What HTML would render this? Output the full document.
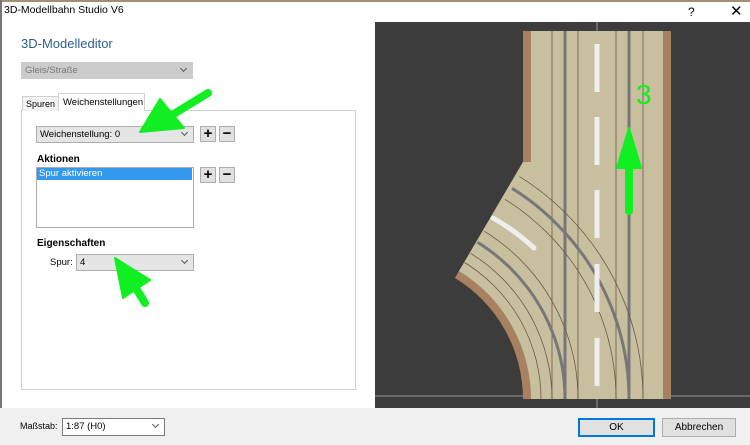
<!DOCTYPE html>
<html><head><meta charset="utf-8"><style>
*{margin:0;padding:0;box-sizing:border-box}
html,body{width:750px;height:445px;overflow:hidden}
body{background:#fff;font-family:"Liberation Sans",sans-serif;font-size:11px;color:#000;position:relative}
.a{position:absolute}
.combo{position:absolute;background:#e5e5e5;border:1px solid #adadad;font-size:9.5px;padding:2px 3px;line-height:11px;overflow:hidden}
.combo:after{content:"";position:absolute;right:6px;top:3px;width:4px;height:4px;border-right:1px solid #555;border-bottom:1px solid #555;transform:rotate(45deg)}
.btn{position:absolute;width:16px;height:16px;background:#e1e1e1;border:1px solid #adadad;font-weight:bold;font-size:15px;line-height:13px;text-align:center}
</style></head><body>
<div class="a" style="left:0;top:0;width:750px;height:2px;background:#a09070"></div>
<div class="a" style="left:0;top:0;width:2px;height:445px;background:#777"></div>
<div class="a" style="left:4px;top:4px;font-size:10.5px">3D-Modellbahn Studio V6</div>
<div class="a" style="left:688px;top:5px;font-size:12px">?</div>
<div class="a" style="left:730px;top:2px;font-size:15px">✕</div>
<div class="a" style="left:21px;top:36px;font-size:13px;color:#2b5f90">3D-Modelleditor</div>
<div class="combo" style="left:21px;top:62px;width:172px;height:17px;background:#ccc;border-color:#ccc;color:#777">Gleis/Straße</div>
<div class="a" style="left:21px;top:110px;width:335px;height:280px;border:1px solid #d0d0d0"></div>
<div class="a" style="left:22px;top:96px;width:37px;height:15px;border:1px solid #d0d0d0;border-bottom:none;font-size:9px;padding:2px 3px;background:#f3f3f3">Spuren</div>
<div class="a" style="left:58px;top:93px;width:87px;height:18px;border:1px solid #d0d0d0;border-bottom:none;font-size:9.5px;padding:3px 4px;background:#fff;white-space:nowrap">Weichenstellungen</div>
<div class="combo" style="left:36px;top:126px;width:158px;height:17px">Weichenstellung: 0</div>
<div class="btn" style="left:200px;top:126px">+</div><div class="btn" style="left:219px;top:126px">−</div>
<div class="a" style="left:37px;top:154px;font-weight:bold;font-size:10px">Aktionen</div>
<div class="a" style="left:36px;top:167px;width:158px;height:61px;border:1px solid #adadad"></div>
<div class="a" style="left:37px;top:168px;width:155px;height:12px;background:#3399ee;color:#fff;font-size:9.5px;padding-left:2px;line-height:12px">Spur aktivieren</div>
<div class="btn" style="left:200px;top:167px">+</div><div class="btn" style="left:219px;top:167px">−</div>
<div class="a" style="left:37px;top:238px;font-weight:bold;font-size:10px">Eigenschaften</div>
<div class="a" style="left:50px;top:257px;font-size:9.5px">Spur:</div>
<div class="combo" style="left:76px;top:254px;width:118px;height:17px">4</div>
<div class="a" style="left:0;top:408px;width:750px;height:37px;background:#f0f0f0"></div>
<div class="a" style="left:20px;top:421px;font-size:9px">Maßstab:</div>
<div class="combo" style="left:62px;top:418px;width:103px;height:18px;background:#fff;border-color:#7a7a7a">1:87 (H0)</div>
<div class="a" style="left:578px;top:418px;width:77px;height:19px;border:2px solid #0078d7;background:#e1e1e1;text-align:center;font-size:10px;line-height:15px">OK</div>
<div class="a" style="left:662px;top:418px;width:74px;height:19px;border:1px solid #adadad;background:#e1e1e1;text-align:center;font-size:10px;line-height:17px">Abbrechen</div>
<svg class="a" style="left:0;top:0" width="750" height="445">
<defs><clipPath id="c"><path d="M531,31 L663,31 L663,399 L531,399 A150 150 0 0 0 459,271 L527,165 L531,165 Z"/></clipPath></defs>
<rect x="375" y="22" width="375" height="386" fill="#3c3c3c"/>
<line x1="375" y1="396" x2="750" y2="396" stroke="#999"/>
<line x1="597" y1="22" x2="597" y2="31" stroke="#999"/>
<line x1="597" y1="399" x2="597" y2="408" stroke="#999"/>
<path d="M523,31 L671,31 L671,399 L523,399 A142 142 0 0 0 455,278 L523,162 Z" fill="#a88260"/>
<path d="M531,31 L663,31 L663,399 L531,399 A150 150 0 0 0 459,271 L525,162 L531,162 Z" fill="#c8bf9f"/>
<path d="M523,162 L531,162 L531,166 L459,271 L455,278 Z" fill="#c8bf9f"/>
<g fill="none">
<g stroke="#6b5a48" stroke-width="0.8">
<line x1="552" y1="31" x2="552" y2="399"/><line x1="578" y1="31" x2="578" y2="399"/>
<line x1="616" y1="31" x2="616" y2="399"/><line x1="643" y1="31" x2="643" y2="399"/>
</g>
<g stroke="#77777a" stroke-width="3">
<line x1="565" y1="31" x2="565" y2="399"/><line x1="629" y1="31" x2="629" y2="399"/>
</g>
<g clip-path="url(#c)">
<g stroke="#6b5a48" stroke-width="0.8">
<circle cx="381" cy="399" r="160"/><circle cx="381" cy="399" r="171"/><circle cx="381" cy="399" r="197"/>
<circle cx="381" cy="399" r="235"/><circle cx="381" cy="399" r="262"/>
</g>
<g stroke="#77777a" stroke-width="3">
<circle cx="381" cy="399" r="184"/><circle cx="381" cy="399" r="248"/>
</g>
</g>
<g stroke="#eeeeee" stroke-width="5">
<line x1="597" y1="44" x2="597" y2="92"/><line x1="597" y1="117" x2="597" y2="165"/>
<line x1="597" y1="190" x2="597" y2="238"/><line x1="597" y1="264" x2="597" y2="312"/>
<line x1="597" y1="338" x2="597" y2="386"/>
<path d="M493,218 A214 214 0 0 1 534,248" stroke-linecap="round"/>
</g>
</g>
<g fill="#11ee22" stroke="#11ee22" stroke-linecap="round" stroke-linejoin="round">
<line x1="208" y1="93" x2="172" y2="115" stroke-width="8"/>
<polygon points="140,132 160,99 184,128" stroke-width="2"/>
<line x1="145" y1="303" x2="134" y2="285" stroke-width="8"/>
<polygon points="115,258 123,298 150,280" stroke-width="2"/>
<line x1="629" y1="211" x2="629" y2="165" stroke-width="8"/>
<polygon points="629,128 617,168 641,168" stroke-width="2"/>
</g>
<text x="636" y="104" font-family="Liberation Sans,sans-serif" font-size="28" fill="#11ee22">3</text>
</svg>
</body></html>
